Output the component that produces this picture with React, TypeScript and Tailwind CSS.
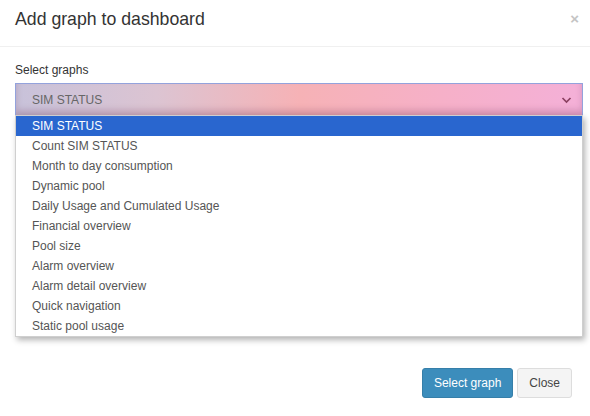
const GRAPHS = [
  "SIM STATUS",
  "Count SIM STATUS",
  "Month to day consumption",
  "Dynamic pool",
  "Daily Usage and Cumulated Usage",
  "Financial overview",
  "Pool size",
  "Alarm overview",
  "Alarm detail overview",
  "Quick navigation",
  "Static pool usage",
];

export default function App() {
  return (
    <div className="w-[590px] h-[416px] bg-white font-['Liberation_Sans',Arial,sans-serif] flex flex-col">
      {/* Header */}
      <div className="h-[47px] pl-[15px] pr-[7px] flex items-center justify-between border-b border-[#f0f0f0]">
        <h4 className="text-[17.7px] text-[#333] leading-none pb-[7px] pt-[1px]">Add graph to dashboard</h4>
        <span className="text-[#c4c4c4] text-[15px] font-bold leading-none pb-[9px] mr-[4px]">×</span>
      </div>

      {/* Body */}
      <div className="pl-[15px] pr-[7px] pt-[16px] flex-1">
        <label className="block text-[12px] text-[#333] leading-[15px] mb-[5px]">Select graphs</label>
        <div className="relative">
          <div className="h-[33px] flex items-center justify-between pl-[16px] pr-[10px] border border-[#93a2dc] bg-[linear-gradient(90deg,#c8c2da_0%,#dcc4d2_25%,#f6b2b6_50%,#f6b0c8_75%,#f4b0d8_100%)] shadow-[inset_0_-5px_6px_rgba(120,60,90,0.25)]">
            <span className="text-[12px] text-[#666]">SIM STATUS</span>
            <svg width="11" height="8" viewBox="0 0 11 8" className="mt-[1px]">
              <path d="M1.5 2 L5.5 6 L9.5 2" stroke="#8a4060" strokeWidth="1.7" fill="none" />
            </svg>
          </div>
          {/* Dropdown list */}
          <div className="absolute left-0 right-0 top-[32px] bg-white border border-[#cfcfcf] shadow-[2px_3px_6px_rgba(0,0,0,0.3)] z-10">
            {GRAPHS.map((g, i) => (
              <div
                key={g}
                className={
                  i === 0
                    ? "h-[20px] pl-[16px] flex items-center text-[12px] bg-[#2966cf] text-white"
                    : "h-[20px] pl-[16px] flex items-center text-[12px] text-[#555]"
                }
              >
                {g}
              </div>
            ))}
          </div>
        </div>
      </div>

      {/* Footer */}
      <div className="flex justify-end gap-[4px] px-[18px] pb-[18px]">
        <button className="h-[30px] px-[11px] rounded-[3px] bg-[#3c8dbc] border border-[#367fa9] text-white text-[12px]">
          Select graph
        </button>
        <button className="h-[30px] px-[11px] rounded-[3px] bg-[#f4f4f4] border border-[#ddd] text-[#444] text-[12px]">
          Close
        </button>
      </div>
    </div>
  );
}
